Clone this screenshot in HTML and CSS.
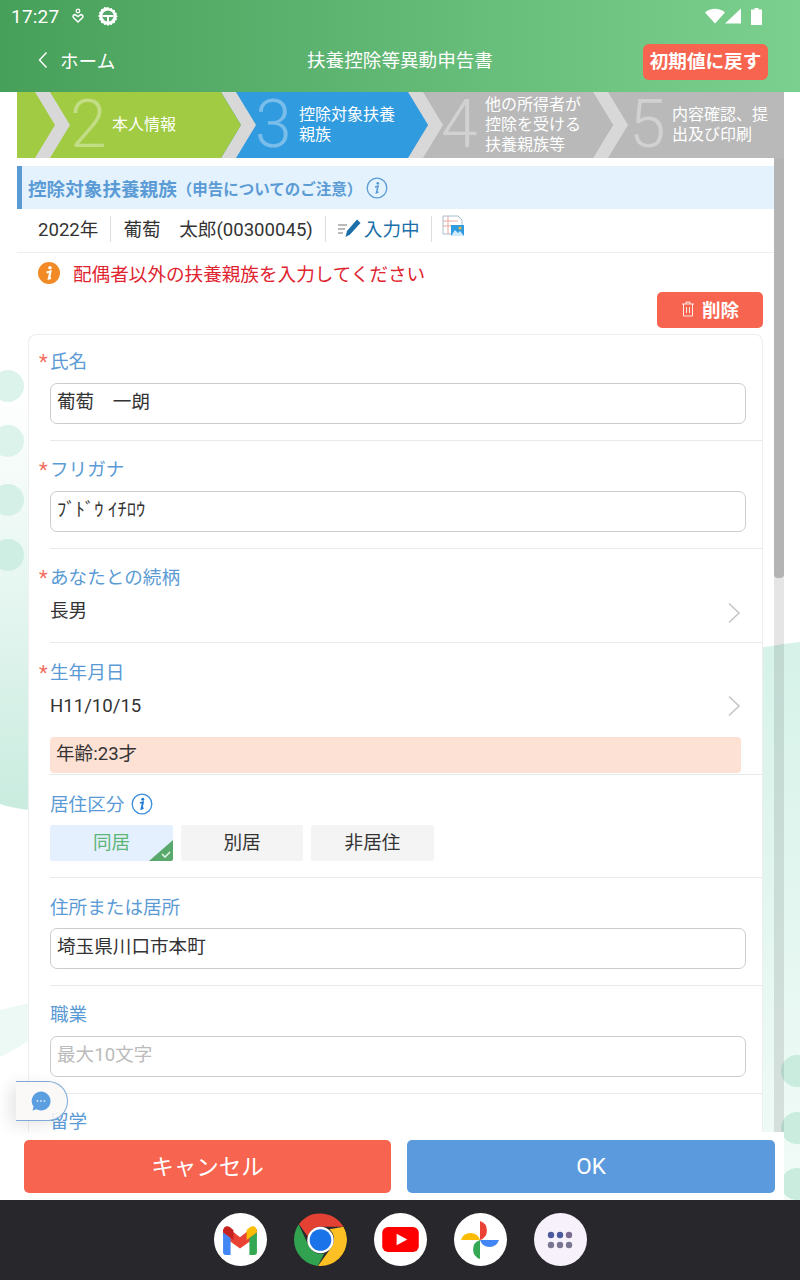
FILE: index.html
```html
<!DOCTYPE html>
<html lang="ja">
<head>
<meta charset="utf-8">
<title>扶養控除等異動申告書</title>
<link rel="stylesheet" href="styles.css">
</head>
<body>
<div class="app">
  <header class="header">
    <div class="status">
      <div class="status-left">
        <span class="clock">17:27</span>
        <svg class="st-ic1" viewBox="0 0 14 16" width="14" height="16"><circle cx="7" cy="3" r="1.8" fill="none" stroke="#fff" stroke-width="1.3"/><path d="M7 14 L2.4 9.6 C1 7.6 3.6 5.8 5 7.2 L7 8.6 L9 7.2 C10.4 5.8 13 7.6 11.6 9.6Z" fill="none" stroke="#fff" stroke-width="1.5"/></svg>
        <svg class="st-ic2" viewBox="0 0 20 20" width="20" height="20"><path d="M10 1l1.6 1.5 2.1-.6 1 1.9 2.2.3.2 2.2 1.9 1-.6 2.1L20 10l-1.6 1.6.6 2.1-1.9 1-.2 2.2-2.2.3-1 1.9-2.1-.6L10 20l-1.6-1.5-2.1.6-1-1.9-2.2-.3-.2-2.2-1.9-1 .6-2.1L0 10l1.6-1.6L1 6.300l1.900-1 .2-2.200 2.200-.3 1-1.900 2.100.6z" fill="#fff"/><circle cx="10" cy="10" r="5.600" fill="#56a96b"/><path d="M4.500 9h11v2h-4.500v5h-2v-5h-4.500z" fill="#fff"/></svg>
      </div>
      <div class="status-right">
        <svg viewBox="0 0 20 16" width="20" height="16"><path d="M0 4.500C5.500-.5 14.500-.5 20 4.500L10 15.500z" fill="#fff"/></svg>
        <svg viewBox="0 0 16 16" width="16" height="16"><path d="M16 .5V15.500H0z" fill="#fff"/></svg>
        <svg class="st-bat" viewBox="0 0 11 17" width="11" height="17"><path d="M3.500 0h4v1.500H11V17H0V1.500h3.500z" fill="#fff"/></svg>
      </div>
    </div>
    <div class="appbar">
      <div class="back">
        <svg viewBox="0 0 12 18" width="12" height="18"><path d="M9.500 1.500L2.500 9l7 7.500" fill="none" stroke="#fff" stroke-width="1.400"/></svg>
        <span>ホーム</span>
      </div>
      <div class="app-title">扶養控除等異動申告書</div>
      <button class="reset">初期値に戻す</button>
    </div>
  </header>

  <main class="main">
    <svg class="decor" viewBox="0 0 800 1108" width="800" height="1108" preserveAspectRatio="none">
      <defs>
        <linearGradient id="gl" x1="0" y1="0" x2="0" y2="1"><stop offset="0" stop-color="#fff"/><stop offset="1" stop-color="#c9ecdf"/></linearGradient>
        <linearGradient id="gr" x1="0" y1="0" x2="0" y2="1"><stop offset="0" stop-color="#d6f2e9"/><stop offset="1" stop-color="#f2fbf8"/></linearGradient>
      </defs>
      <path d="M0 300H30V718Q12 716 0 712Z" fill="url(#gl)"/>
      <path d="M740 560Q770 553 800 550V1108H740Z" fill="url(#gr)"/>
      <path d="M0 918Q14 914 30 911V948Q14 958 0 965Z" fill="#ecf9f5"/>
      <g fill="#dcf3eb">
        <circle cx="8" cy="294" r="16"/><circle cx="8" cy="349" r="16"/><circle cx="8" cy="408" r="16" fill="#d5f0e6"/><circle cx="8" cy="463" r="16" fill="#cfeee3"/>
      </g>
      <g fill="#c9ecdf">
        <circle cx="797" cy="979" r="16"/><circle cx="797" cy="1036" r="16"/><circle cx="797" cy="1092" r="16"/>
      </g>
    </svg>

    <div class="stage">
      <div class="steps">
        <div class="step s2"><span class="num">2</span><span class="lbl">本人情報</span></div>
        <div class="step s3"><span class="num">3</span><span class="lbl">控除対象扶養親族</span></div>
        <div class="step s4"><span class="num">4</span><span class="lbl">他の所得者が控除を受ける扶養親族等</span></div>
        <div class="step s5"><span class="num">5</span><span class="lbl">内容確認、提出及び印刷</span></div>
      </div>

      <div class="scroller">
        <div class="panel">
          <div class="title-bar">
            <span class="t-main">控除対象扶養親族</span><span class="t-sub">（申告についてのご注意）</span>
            <svg class="ic-info" viewBox="0 0 22 22" width="22" height="22"><circle cx="11" cy="11" r="9.800" fill="none" stroke="#5b9bd5" stroke-width="1.300"/><circle cx="11.800" cy="6.300" r="1.400" fill="#5b9bd5"/><path d="M9 10l3-.8-1.500 6.500 2-.8" fill="none" stroke="#5b9bd5" stroke-width="1.600"/></svg>
          </div>
          <div class="info-row">
            <span class="cell">2022年</span>
            <span class="cell">葡萄　太郎(00300045)</span>
            <span class="cell status-cell">
              <svg viewBox="0 0 24 22" width="24" height="22"><path d="M1 9h9M1 13h7M1 17h5" stroke="#777" stroke-width="1.200"/><path d="M8.500 21l1.500-6L20 3.500l3.500 3.500-10.500 11.500z" fill="#1a6fa8"/></svg>
              入力中
            </span>
            <span class="cell img-cell">
              <svg viewBox="0 0 22 22" width="22" height="22"><path d="M1 1h15l4 4v6H10v8H1z" fill="#fff" stroke="#a9bccb" stroke-width="1"/><path d="M1 6h15M1 11h9M6 1v18" stroke="#e9a9a0" stroke-width="1"/><rect x="9" y="10" width="13" height="11" fill="#2f9be0"/><path d="M9 21l4-6 3 3 2-2 4 5z" fill="#cfeafb"/><circle cx="18" cy="13" r="1.500" fill="#f5b73a"/></svg>
            </span>
          </div>
          <div class="warn">
            <svg viewBox="0 0 22 22" width="22" height="22"><circle cx="11" cy="11" r="11" fill="#f28a25"/><circle cx="12" cy="5.800" r="1.800" fill="#fff"/><path d="M8.500 10.500l4-1-1.600 7 2.100-.6" fill="none" stroke="#fff" stroke-width="2.200"/></svg>
            <span>配偶者以外の扶養親族を入力してください</span>
          </div>
          <div class="del-wrap">
            <button class="del">
              <svg viewBox="0 0 14 16" width="14" height="16"><path d="M1 3h12M5 3V1h4v2M2.500 3v12h9V3M5.500 6v6M8.500 6v6" fill="none" stroke="#fff" stroke-width="1" opacity=".85"/></svg>
              削除
            </button>
          </div>

          <div class="card">
            <div class="row first">
              <div class="label req">氏名</div>
              <div class="input">葡萄　一朗</div>
            </div>
            <div class="row">
              <div class="label req">フリガナ</div>
              <div class="input">ﾌﾞﾄﾞｳ ｲﾁﾛｳ</div>
            </div>
            <div class="row select">
              <div class="label req">あなたとの続柄</div>
              <div class="value">長男<svg class="chev" viewBox="0 0 14 22" width="14" height="22"><path d="M2 1.500L12 11 2 20.500" fill="none" stroke="#c4c4c4" stroke-width="1.500"/></svg></div>
            </div>
            <div class="row select birth">
              <div class="label req">生年月日</div>
              <div class="value">H11/10/15<svg class="chev" viewBox="0 0 14 22" width="14" height="22"><path d="M2 1.500L12 11 2 20.500" fill="none" stroke="#c4c4c4" stroke-width="1.500"/></svg></div>
              <div class="age">年齢:23才</div>
            </div>
            <div class="row seg-row">
              <div class="label">居住区分
                <svg class="ic-info2" viewBox="0 0 22 22" width="22" height="22"><circle cx="11" cy="11" r="9.800" fill="none" stroke="#3a8ee0" stroke-width="1.300"/><circle cx="11.800" cy="6.300" r="1.500" fill="#1f78d1"/><path d="M9 10l3-.8-1.500 6.500 2-.8" fill="none" stroke="#1f78d1" stroke-width="1.800"/></svg>
              </div>
              <div class="segs">
                <div class="seg on">同居<svg class="tick" viewBox="0 0 24 21" width="24" height="21"><path d="M24 0V21H0z" fill="#5aa96c"/><path d="M13 14l3 3 5-5" fill="none" stroke="#dff3e4" stroke-width="1.600"/></svg></div>
                <div class="seg mid">別居</div>
                <div class="seg">非居住</div>
              </div>
            </div>
            <div class="row addr">
              <div class="label">住所または居所</div>
              <div class="input">埼玉県川口市本町</div>
            </div>
            <div class="row">
              <div class="label">職業</div>
              <div class="input ph">最大10文字</div>
            </div>
            <div class="row last">
              <div class="label">留学</div>
            </div>
          </div>
        </div>
        <div class="scrollbar"><div class="thumb"></div></div>
      </div>

      <div class="actions">
        <button class="btn cancel">キャンセル</button>
        <button class="btn ok">OK</button>
      </div>
    </div>

    <div class="chat">
      <svg viewBox="0 0 20 20" width="20" height="20"><path d="M10 .5a9.500 9.500 0 1 1-4.600 17.800L1.500 19.500l1-4A9.500 9.500 0 0 1 10 .5z" fill="#5c9fe0"/><circle cx="6.500" cy="10" r=".9" fill="#d5e6f7"/><circle cx="10" cy="10" r=".9" fill="#d5e6f7"/><circle cx="13.500" cy="10" r=".9" fill="#d5e6f7"/></svg>
    </div>
  </main>

  <footer class="dock">
    <div class="app-ic">
      <svg viewBox="0 0 40 34" width="38" height="32">
        <path d="M2 6l4-3 14 11L34 3l4 3v7L20 26 2 13z" fill="#ea4335"/>
        <path d="M2 8c0-6 5-7 8-4l3 2.400V17L2 9z" fill="#c5221f"/>
        <path d="M38 8c0-6-5-7-8-4l-3 2.400V17l11-8z" fill="#fbbc04"/>
        <path d="M2 9l8 6v18H5c-2 0-3-1.500-3-3z" fill="#4285f4"/>
        <path d="M38 9l-8 6v18h5c2 0 3-1.500 3-3z" fill="#34a853"/>
      </svg>
    </div>
    <div class="app-ic chrome">
      <svg viewBox="0 0 54 54" width="54" height="54">
        <path d="M27 0a27 27 0 0 1 23.400 13.500H27a13.500 13.500 0 0 0-13 10L4 9.500A27 27 0 0 1 27 0z" fill="#e34133"/>
        <path d="M4 9.500L15.300 33.700A13.500 13.500 0 0 0 31 40.500L24 54A27 27 0 0 1 4 9.500z" fill="#31a350"/>
        <path d="M50.400 13.500A27 27 0 0 1 24 54l14.700-20.500A13.500 13.500 0 0 0 36 16z" fill="#fcc024"/>
        <circle cx="27" cy="27" r="13.500" fill="#fff"/><circle cx="27" cy="27" r="11" fill="#1a73e8"/>
      </svg>
    </div>
    <div class="app-ic">
      <svg viewBox="0 0 38 26" width="37" height="25"><rect width="38" height="26" rx="6" fill="#f00"/><path d="M15 7l11 6-11 6z" fill="#fff"/></svg>
    </div>
    <div class="app-ic">
      <svg viewBox="0 0 40 40" width="40" height="40">
        <path d="M20 20V1a10 10 0 0 1 0 19z" fill="#ea4335"/>
        <path d="M20 20H1a10 10 0 0 1 19 0z" fill="#fbbc04"/>
        <path d="M20 20v19a10 10 0 0 1 0-19z" fill="#34a853"/>
        <path d="M20 20h19a10 10 0 0 1-19 0z" fill="#4285f4"/>
      </svg>
    </div>
    <div class="app-ic apps">
      <svg viewBox="0 0 26 18" width="26" height="18"><g fill="#4b5a9c"><circle cx="4" cy="4" r="3.200"/><circle cx="13" cy="4" r="3.200"/></g><circle cx="22" cy="4" r="3.200" fill="#7b6a8f"/><g fill="#77758f"><circle cx="4" cy="14" r="3.200"/><circle cx="13" cy="14" r="3.200"/><circle cx="22" cy="14" r="3.200"/></g></svg>
    </div>
  </footer>
</div>
</body>
</html>
```
FILE: styles.css
```css
* { box-sizing: border-box; }
html, body { margin: 0; padding: 0; height: 1280px; overflow: hidden; background: #fff; }
body { font-family: Roboto, "Noto Sans CJK JP", "Noto Sans", sans-serif; color: #333; }
button { font-family: inherit; border: 0; padding: 0; }
.app { width: 800px; height: 1280px; display: flex; flex-direction: column; }

.header { height: 92px; flex: none; background: linear-gradient(90deg, #47a05a, #7cd08f); color: #fff; position: relative; z-index: 3; }
.status { height: 32px; display: flex; justify-content: space-between; align-items: center; padding: 0 38px 0 11px; }
.status-left, .status-right { display: flex; align-items: center; }
.clock { font-size: 19px; letter-spacing: .2px; margin-right: 12px; }
.st-ic2 { margin-left: 13px; }
.st-bat { margin-left: 10px; }
.appbar { height: 60px; display: flex; align-items: center; position: relative; padding: 0 37px 4px; justify-content: space-between; }
.back { display: flex; align-items: center; gap: 11px; font-size: 18.600px; }
.back span { padding-bottom: 2px; }
.app-title { position: absolute; left: 0; right: 0; top: 16px; text-align: center; font-size: 18.600px; line-height: 26px; }
.reset { position: relative; width: 125px; height: 36px; background: #f7644f; color: #fff; font-size: 18.600px; font-weight: 700; border-radius: 6px; margin-left: auto; left: 5px; top: 2px; padding-bottom: 5px; }

.main { flex: 1; min-height: 0; position: relative; }
.decor { position: absolute; left: 0; top: 0; }
.stage { position: relative; margin: 0 16px 0 17px; height: 100%; display: flex; flex-direction: column; }

.steps { height: 66px; flex: none; display: flex; background: #b9b9b9; position: relative; }
.step { position: relative; height: 66px; display: flex; align-items: center; color: #fff; }
.step::after { content: ""; position: absolute; top: 0; right: -20px; width: 20px; height: 66px; z-index: 2; clip-path: polygon(0 0, 0 100%, 100% 50%); background: inherit; }
.step::before { content: ""; position: absolute; top: 0; right: -35px; width: 35px; height: 66px; z-index: 1; clip-path: polygon(0 0, 15px 0, 35px 50%, 15px 100%, 0 100%, 20px 50%); background: #d8d8d8; }
.s2 { width: 204px; background: #a1cb42; padding-left: 53px; }
.s3 { width: 187px; background: #319bdf; padding-left: 34px; }
.s4 { width: 185px; background: #b9b9b9; padding-left: 33px; }
.s5 { flex: 1; background: #b9b9b9; padding-left: 36px; }
.s5::before, .s5::after { display: none; }
.steps::before { content: ""; position: absolute; left: 18px; top: 0; width: 35px; height: 66px; z-index: 3; background: #d8d8d8; clip-path: polygon(0 0, 15px 0, 35px 50%, 15px 100%, 0 100%, 20px 50%); }
.num { font-size: 66px; line-height: 66px; font-weight: 300; opacity: .35; width: 40px; flex: none; font-family: Roboto, sans-serif; }
.lbl { font-size: 16px; line-height: 20px; }
.s2 .lbl { margin-left: 2px; }
.s3 .lbl, .s4 .lbl { width: 100px; margin-left: 4px; }
.s5 .lbl { width: 97px; margin-left: 3px; }

.scroller { flex: 1; min-height: 0; display: flex; overflow: hidden; }
.panel { width: 757px; flex: none; display: flex; flex-direction: column; overflow: hidden; padding-top: 8px; }
.scrollbar { width: 10px; flex: none; background: rgba(0,0,0,.1); }
.thumb { height: 420px; background: #b4b4b4; border-radius: 0 0 4px 4px; }

.title-bar { height: 43px; flex: none; background: #e3f2fd; border-left: 5px solid #5b9bd5; display: flex; align-items: center; padding-left: 6px; color: #5b9bd5; font-weight: 700; }
.t-main { font-size: 18.600px; }
.t-sub { font-size: 15.500px; }
.ic-info { margin-left: 4px; }

.info-row { height: 44px; flex: none; border-bottom: 1px solid #eee; display: flex; align-items: center; padding: 0 0 4px 9px; font-size: 18.600px; color: #333; }
.cell { display: flex; align-items: center; height: 26px; padding: 0 12px 3px; border-right: 1px solid #ddd; }
.status-cell { color: #1a6fa8; gap: 3px; padding: 0 11px 3px; }
.img-cell { border: 0; align-self: flex-start; margin-top: 6px; padding: 0 10px; align-items: flex-start; }

.warn { height: 39px; flex: none; display: flex; align-items: center; padding-left: 21px; gap: 13px; color: #e0242f; font-size: 18.600px; }
.del-wrap { height: 42px; flex: none; display: flex; justify-content: flex-end; padding-right: 11px; }
.del { width: 106px; height: 36px; background: #f7644f; color: #fff; font-size: 18.600px; font-weight: 700; border-radius: 5px; display: flex; align-items: center; justify-content: center; gap: 7px; padding-bottom: 3px; }

.card { margin: 0 11px; border: 1px solid #eee; border-bottom: 0; border-radius: 8px 8px 0 0; flex: 1; padding-left: 21px; background: #fff; }
.row { border-bottom: 1px solid #e9e9e9; height: 108px; padding-top: 17px; }
.row.first { height: 106px; padding-top: 15px; }
.row.select { height: 94px; }
.row.birth { height: 132px; padding-top: 18px; }
.row.seg-row { height: 103px; padding-top: 18px; }
.row.addr { padding-top: 18px; }
.row.last { border: 0; height: auto; padding-top: 16px; }
.label { position: relative; font-size: 18.600px; line-height: 24px; color: #5b9bd5; display: flex; align-items: center; }
.input { margin: 9px 16px 0 0; height: 41px; border: 1px solid #ccc; border-radius: 7px; padding: 0 6px 8px; display: flex; align-items: center; font-size: 18.600px; color: #333; background: #fff; }
.addr .input { margin-top: 8px; }
.input.ph { color: #bbb; }
.req::before { content: "*"; position: absolute; left: -11px; top: 0; color: #f2705f; font-size: 20px; }
.value { display: flex; justify-content: space-between; align-items: center; height: 34px; font-size: 18.600px; margin: 1px 16px 0 0; padding-right: 5px; color: #333; }
.chev { position: relative; top: 5px; }
.birth .value { margin-top: 4px; }
.birth .chev { top: 0; }
.age { width: 691px; height: 36px; margin-top: 14px; background: #fde1d5; border-radius: 4px; padding-left: 6px; line-height: 35px; font-size: 18.600px; }
.ic-info2 { margin: 0 0 2px 7px; }
.segs { display: flex; gap: 8px; margin-top: 8px; }
.seg { width: 123px; height: 36px; background: #f4f4f4; border-radius: 2px; display: flex; align-items: center; justify-content: center; font-size: 18.600px; color: #333; position: relative; overflow: hidden; padding-bottom: 5px; }
.seg.mid { width: 122px; }
.seg.on { background: #e4f0fd; color: #5db578; }
.tick { position: absolute; right: 0; bottom: 0; }

.actions { position: absolute; left: 0; right: 0; bottom: 0; height: 68px; background: #fff; display: flex; padding: 8px 9px 7px 7px; gap: 16px; z-index: 2; }
.btn { height: 53px; border-radius: 5px; color: #fff; font-size: 22.500px; padding-bottom: 3px; }
.cancel { width: 367px; flex: none; background: #f7644f; }
.ok { flex: 1; background: #5b9bdd; padding-bottom: 1px; }

.chat { position: absolute; left: 16px; top: 989px; width: 52px; height: 40px; background: rgba(250,248,246,.9); border: 1px solid #7fa8d8; border-left: 0; border-radius: 0 20px 20px 0; display: flex; align-items: center; justify-content: center; box-shadow: -6px 4px 16px rgba(0,0,0,.1); z-index: 4; padding-right: 2px; }

.dock { height: 80px; flex: none; background: #27272c; display: flex; align-items: flex-start; justify-content: center; gap: 27px; padding-top: 13px; position: relative; z-index: 3; }
.app-ic { width: 53px; height: 53px; border-radius: 50%; background: #fff; display: flex; align-items: center; justify-content: center; overflow: hidden; }
.chrome { background: transparent; }
.apps { background: #f6f1fa; }
```
